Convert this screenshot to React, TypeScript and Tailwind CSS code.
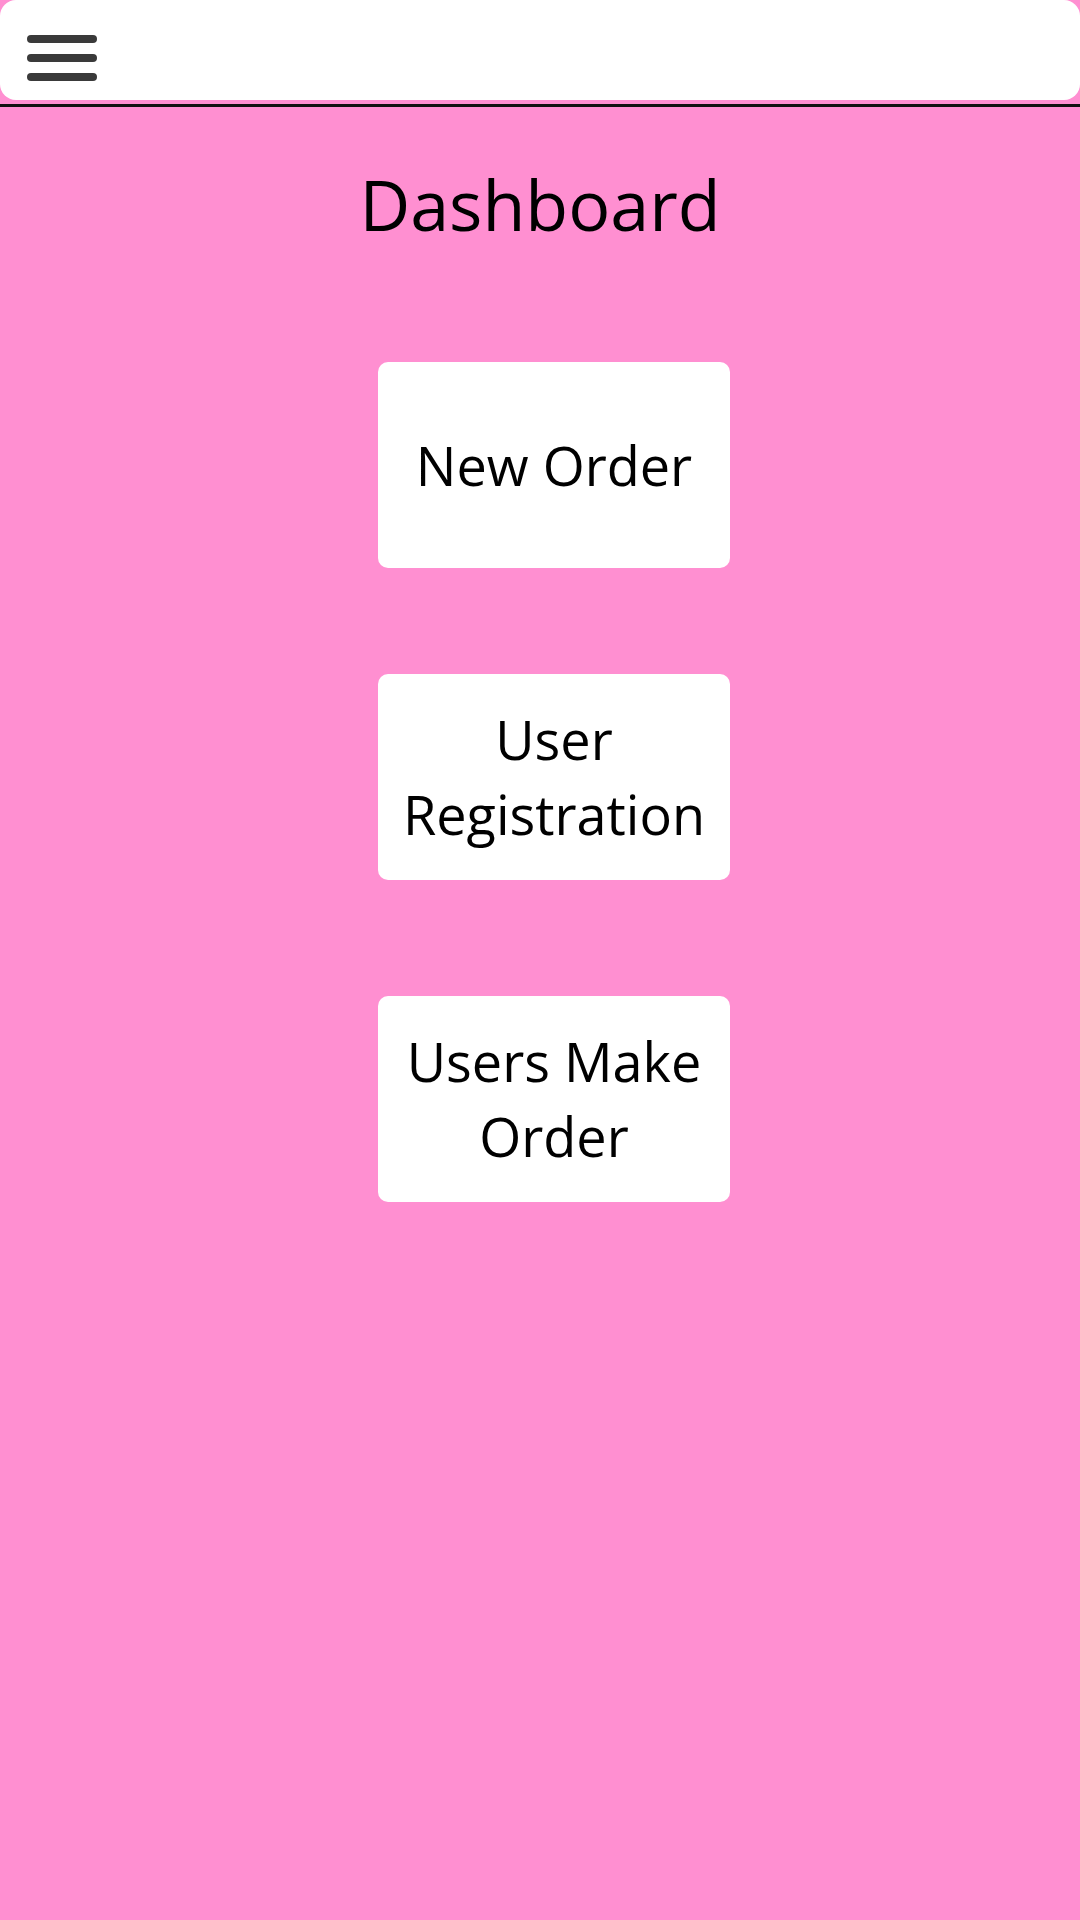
import React from "react";

const buttons = [
  { label: "New Order", mt: "mt-[112px]" },
  { label: "User Registration", mt: "mt-[106px]" },
  { label: "Users Make Order", mt: "mt-[116px]" },
];

function MenuIcon() {
  return (
    <svg width="72" height="48" viewBox="0 0 72 48" fill="none">
      <rect x="1" y="0" width="70" height="8" rx="4" fill="#3a3a3a" />
      <rect x="1" y="19" width="70" height="8" rx="4" fill="#3a3a3a" />
      <rect x="1" y="38" width="70" height="8" rx="4" fill="#3a3a3a" />
    </svg>
  );
}

export default function App() {
  return (
    <div
      className="min-h-[1920px] bg-[#ff8fd1] text-black"
      style={{ fontFamily: '"Open Sans", "Noto Sans", sans-serif' }}
    >
      <header className="h-[100px] bg-white rounded-[16px] flex items-center pl-[26px] pt-[18px]">
        <MenuIcon />
      </header>
      <div className="mt-[4px] border-t-[3px] border-[#111]" />

      <h1 className="mt-[51px] text-center text-[70px] leading-[92px] font-normal">
        Dashboard
      </h1>

      <div className="flex flex-col items-center pl-[28px]">
        {buttons.map((b) => (
          <button
            key={b.label}
            className={`${b.mt} w-[352px] h-[206px] bg-white rounded-[10px] flex items-center justify-center px-3 text-center text-[54px] leading-[75px]`}
          >
            {b.label}
          </button>
        ))}
      </div>
    </div>
  );
}
